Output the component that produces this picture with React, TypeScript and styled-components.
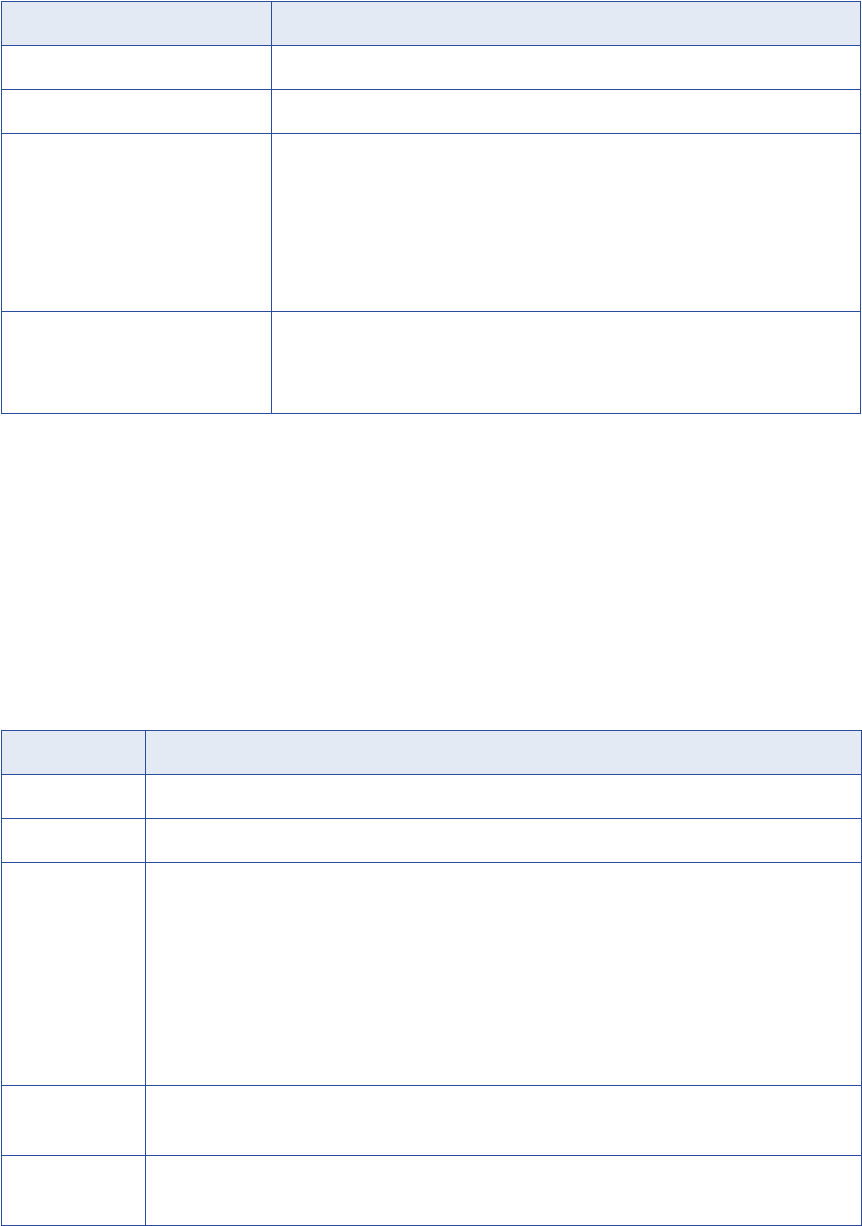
import React, { FC } from 'react';
import styled, { createGlobalStyle } from 'styled-components';

const GlobalStyle = createGlobalStyle`
    html, body {
        margin: 0;
        padding: 0;
        background: #fff;
        font-family: "Liberation Sans", Arial, sans-serif;
    }
`;

const Page = styled.div`
    padding: 1px 0 0 1px;
    width: 862px;
    box-sizing: border-box;
`;

const Table = styled.div<{ $cols: string; $gap?: number }>`
    display: grid;
    grid-template-columns: ${p => p.$cols};
    border-top: 1px solid #2b4c9c;
    border-left: 1px solid #2b4c9c;
    margin-top: ${p => p.$gap || 0}px;
    width: fit-content;
`;

const Cell = styled.div<{ $h: number; $head?: boolean }>`
    box-sizing: border-box;
    height: ${p => p.$h}px;
    border-right: 1px solid #2b4c9c;
    border-bottom: 1px solid #2b4c9c;
    background: ${p => (p.$head ? '#e4eaf4' : '#fff')};
`;

interface GridProps {
    cols: number[];
    rows: number[];
    gap?: number;
}

const EmptyTable: FC<GridProps> = ({ cols, rows, gap }) => (
    <Table $cols={cols.map(c => `${c}px`).join(' ')} $gap={gap}>
        {rows.map((h, r) =>
            cols.map((_, c) => <Cell key={`${r}-${c}`} $h={h} $head={r === 0} />)
        )}
    </Table>
);

const App: FC = () => (
    <>
        <GlobalStyle />
        <Page>
            <EmptyTable cols={[270, 589]} rows={[44, 44, 44, 178, 102]} />
            <EmptyTable cols={[144, 716]} rows={[44, 44, 44, 223, 70, 70]} gap={316} />
        </Page>
    </>
);

export default App;
